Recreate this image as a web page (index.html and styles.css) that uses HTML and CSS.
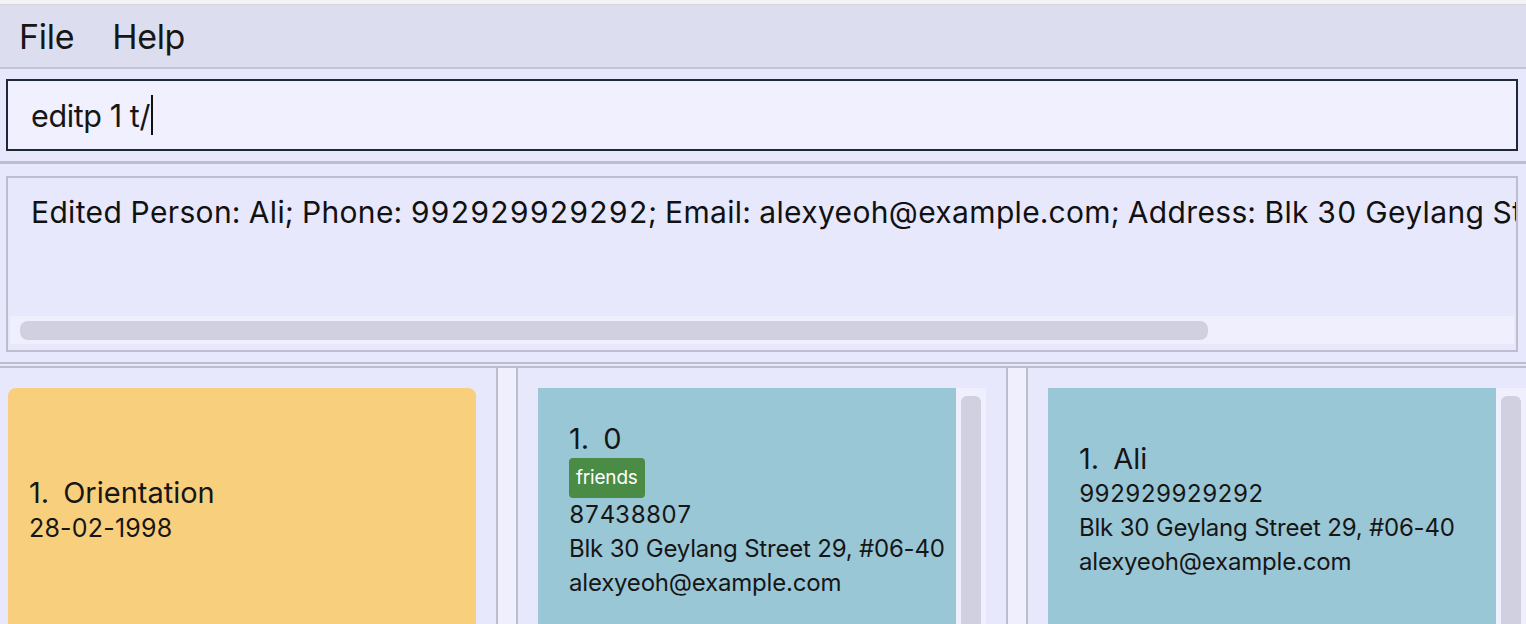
FILE: index.html
```html
<!DOCTYPE html>
<html>
<head>
<meta charset="utf-8">
<link rel="stylesheet" href="styles.css">
</head>
<body>
<div class="app">
  <div class="topstrip"></div>
  <div class="menubar">
    <span class="menu-item">File</span>
    <span class="menu-item">Help</span>
  </div>
  <div class="command-area">
    <div class="command-box"><span class="command-text">editp 1 t/</span><span class="caret"></span></div>
  </div>
  <div class="result-area">
    <div class="result-box">
      <div class="result-text">Edited Person: Ali; Phone: 992929929292; Email: alexyeoh@example.com; Address: Blk 30 Geylang Street 29, #06-40; Tags: [friends]</div>
      <div class="hscroll"><div class="hthumb"></div></div>
    </div>
  </div>
  <div class="lists">
    <div class="col col-events">
      <div class="card card-event">
        <div class="card-title"><span class="idx">1.</span>Orientation</div>
        <div class="card-line">28-02-1998</div>
      </div>
    </div>
    <div class="col col-bordered">
      <div class="list">
        <div class="card card-person">
          <div class="card-title"><span class="idx">1.</span>0</div>
          <div class="tags"><span class="tag">friends</span></div>
          <div class="card-line num">87438807</div>
          <div class="card-line">Blk 30 Geylang Street 29, #06-40</div>
          <div class="card-line">alexyeoh@example.com</div>
        </div>
        <div class="vtrack"><div class="vthumb"></div></div>
      </div>
    </div>
    <div class="col col-bordered col-last">
      <div class="list">
        <div class="card card-person">
          <div class="card-title"><span class="idx">1.</span>Ali</div>
          <div class="card-line num">992929929292</div>
          <div class="card-line">Blk 30 Geylang Street 29, #06-40</div>
          <div class="card-line">alexyeoh@example.com</div>
        </div>
        <div class="vtrack"><div class="vthumb"></div></div>
      </div>
    </div>
  </div>
</div>
</body>
</html>
```
FILE: styles.css
```css
html, body {
  margin: 0;
  padding: 0;
  width: 1526px;
  height: 624px;
  overflow: hidden;
  background: #e8e8fc;
  font-family: "Inter", "Noto Sans", sans-serif;
  color: #161616;
}
.app {
  display: flex;
  flex-direction: column;
  width: 1526px;
}
.topstrip {
  height: 4px;
  background: #f4f4f6;
  border-bottom: 1px solid #d6d6de;
}
.menubar {
  height: 62px;
  background: #dcdef0;
  border-bottom: 2px solid #c4c4d4;
  display: flex;
  align-items: center;
  padding-left: 19px;
  gap: 38px;
  font-size: 34px;
  letter-spacing: -0.3px;
}
.command-area {
  padding: 10px 8px 10px 6px;
  height: 72px;
}
.command-box {
  height: 68px;
  border: 2px solid #1e2838;
  background: #f0f0fe;
  display: flex;
  align-items: center;
  padding-left: 23px;
  font-size: 30.5px;
  letter-spacing: -0.4px;
}
.caret {
  display: inline-block;
  width: 2px;
  height: 40px;
  background: #111;
  margin-left: 1px;
}
.result-area {
  border-top: 3px solid #bdbdcd;
  border-bottom: 2px solid #bdbdcd;
  padding: 12px 8px 10px 6px;
}
.result-box {
  height: 172px;
  border: 2px solid #bdbdcd;
  display: flex;
  flex-direction: column;
  overflow: hidden;
}
.result-text {
  white-space: nowrap;
  font-size: 30px;
  letter-spacing: 0.35px;
  font-variant-numeric: tabular-nums;
  padding: 16px 0 0 23px;
  flex: 1;
  color: #111;
}
.hscroll {
  height: 28px;
  margin: 0 2px 6px 2px;
  background: #efeffd;
  display: flex;
  align-items: center;
  padding-left: 10px;
}
.hthumb {
  width: 1188px;
  height: 19px;
  background: #d0d0e0;
  border-radius: 8px;
}
.lists {
  margin-top: 2px;
  border-top: 2px solid #bdbdcd;
  background: #efeffd;
  display: flex;
  gap: 18px;
  height: 300px;
}
.col {
  background: #e8e8fc;
  height: 300px;
  box-sizing: border-box;
}
.col-events {
  width: 498px;
  flex: none;
  border-right: 2px solid #bdbdcd;
  padding: 20px 20px 0 8px;
}
.col-bordered {
  width: 492px;
  flex: none;
  border-left: 2px solid #bdbdcd;
  border-right: 2px solid #bdbdcd;
  padding: 20px 20px 0 20px;
}
.col-last {
  width: 520px;
  border-right: none;
}
.list {
  background: #efeffd;
  display: flex;
  height: 280px;
}
.card {
  height: 244px;
  display: flex;
  flex-direction: column;
  justify-content: center;
  box-sizing: border-box;
}
.card-event {
  background: #f8cf7c;
  border-radius: 8px;
  padding-left: 21px;
}
.card-person {
  background: #9ac7d6;
  flex: 1;
  padding-left: 31px;
}
.card-title {
  font-size: 29px;
  letter-spacing: 0px;
  line-height: 36px;
}
.idx {
  margin-right: 14px;
}
.card-line {
  font-size: 24px;
  letter-spacing: -0.2px;
  line-height: 34px;
}
.card-line.num {
  font-variant-numeric: tabular-nums;
}
.card-event .card-line {
  font-size: 25px;
  letter-spacing: 0.2px;
}
.tags {
  display: flex;
  margin: 1px 0 0 0;
}
.tag {
  background: #4a8c46;
  color: #fff;
  font-size: 19px;
  line-height: 40px;
  padding: 0 7px;
  border-radius: 4px;
  letter-spacing: -0.2px;
}
.vtrack {
  width: 30px;
  display: flex;
  justify-content: center;
  padding-top: 8px;
}
.vthumb {
  width: 20px;
  height: 260px;
  background: #d0d0e0;
  border-radius: 6px;
}
```
